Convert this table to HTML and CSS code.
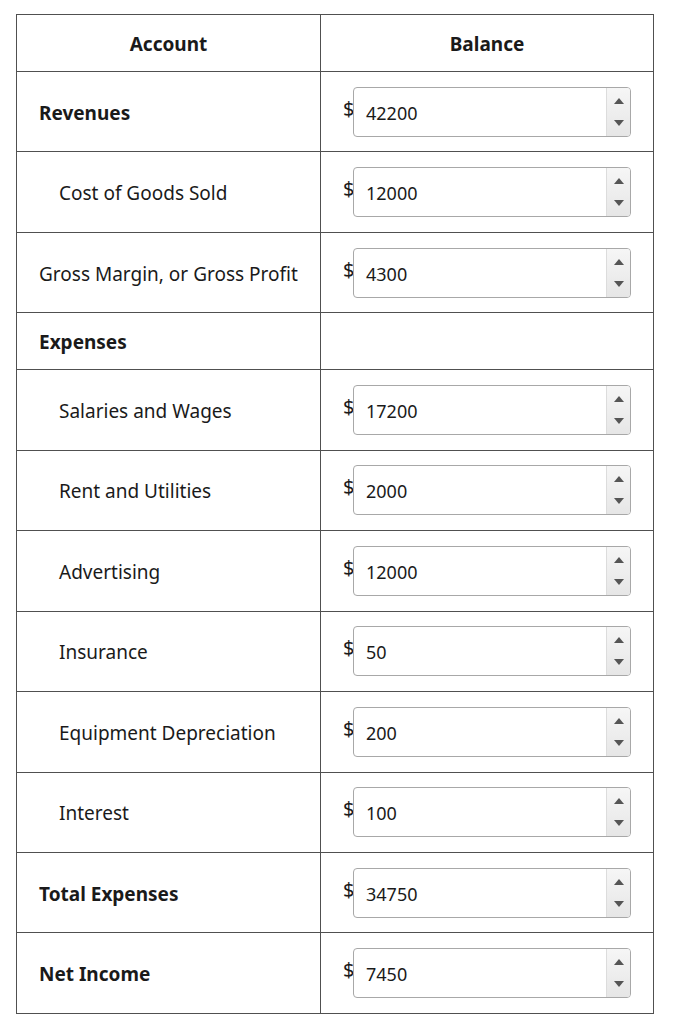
FILE: index.html
```html
<!DOCTYPE html>
<html>
<head>
<meta charset="utf-8">
<link rel="stylesheet" href="styles.css">
</head>
<body>
<table class="sheet">
  <thead>
    <tr><th class="col-account">Account</th><th class="col-balance">Balance</th></tr>
  </thead>
  <tbody>
    <tr><td class="acct bold">Revenues</td><td class="bal"><div class="money"><span class="cur">$</span><div class="spin"><span class="val">42200</span><span class="arrows"><i class="up"></i><i class="down"></i></span></div></div></td></tr>
    <tr><td class="acct indent">Cost of Goods Sold</td><td class="bal"><div class="money"><span class="cur">$</span><div class="spin"><span class="val">12000</span><span class="arrows"><i class="up"></i><i class="down"></i></span></div></div></td></tr>
    <tr><td class="acct">Gross Margin, or Gross Profit</td><td class="bal"><div class="money"><span class="cur">$</span><div class="spin"><span class="val">4300</span><span class="arrows"><i class="up"></i><i class="down"></i></span></div></div></td></tr>
    <tr class="short"><td class="acct bold">Expenses</td><td class="bal"></td></tr>
    <tr><td class="acct indent">Salaries and Wages</td><td class="bal"><div class="money"><span class="cur">$</span><div class="spin"><span class="val">17200</span><span class="arrows"><i class="up"></i><i class="down"></i></span></div></div></td></tr>
    <tr><td class="acct indent">Rent and Utilities</td><td class="bal"><div class="money"><span class="cur">$</span><div class="spin"><span class="val">2000</span><span class="arrows"><i class="up"></i><i class="down"></i></span></div></div></td></tr>
    <tr><td class="acct indent">Advertising</td><td class="bal"><div class="money"><span class="cur">$</span><div class="spin"><span class="val">12000</span><span class="arrows"><i class="up"></i><i class="down"></i></span></div></div></td></tr>
    <tr><td class="acct indent">Insurance</td><td class="bal"><div class="money"><span class="cur">$</span><div class="spin"><span class="val">50</span><span class="arrows"><i class="up"></i><i class="down"></i></span></div></div></td></tr>
    <tr><td class="acct indent">Equipment Depreciation</td><td class="bal"><div class="money"><span class="cur">$</span><div class="spin"><span class="val">200</span><span class="arrows"><i class="up"></i><i class="down"></i></span></div></div></td></tr>
    <tr><td class="acct indent">Interest</td><td class="bal"><div class="money"><span class="cur">$</span><div class="spin"><span class="val">100</span><span class="arrows"><i class="up"></i><i class="down"></i></span></div></div></td></tr>
    <tr><td class="acct bold">Total Expenses</td><td class="bal"><div class="money"><span class="cur">$</span><div class="spin"><span class="val">34750</span><span class="arrows"><i class="up"></i><i class="down"></i></span></div></div></td></tr>
    <tr><td class="acct bold">Net Income</td><td class="bal"><div class="money"><span class="cur">$</span><div class="spin"><span class="val">7450</span><span class="arrows"><i class="up"></i><i class="down"></i></span></div></div></td></tr>
  </tbody>
</table>
</body>
</html>
```

FILE: styles.css
```css
html, body {
  margin: 0;
  padding: 0;
  background: #fff;
}
body {
  padding: 14px 0 0 16px;
  font-family: "Noto Sans", "Open Sans", sans-serif;
  color: #1a1a1a;
}
.sheet {
  border-collapse: collapse;
  width: 638px;
  table-layout: fixed;
}
.sheet th, .sheet td {
  border: 1px solid #505050;
  padding: 0;
}
.col-account { width: 304px; }
.sheet th {
  height: 57px;
  font-size: 19px;
  font-weight: 700;
  text-align: center;
  padding-top: 2px;
  box-sizing: border-box;
}
.sheet tbody tr { height: 80.45px; }
.sheet tbody tr.short { height: 57px; }
.acct {
  font-size: 19px;
  padding-left: 22px !important;
  padding-top: 2px !important;
  white-space: nowrap;
}
.acct.indent { padding-left: 42px !important; }
.acct.bold { font-weight: 700; }
.bal {
  padding: 0 22px 0 22px !important;
}
.money {
  display: flex;
  align-items: center;
}
.cur {
  font-size: 20px;
  width: 9px;
  margin-right: 1px;
  margin-bottom: 6px;
  line-height: 1;
}
.spin {
  flex: 1;
  height: 48px;
  border: 1px solid #a8a8a8;
  border-radius: 4px;
  display: flex;
  align-items: center;
  overflow: hidden;
}
.val {
  flex: 1;
  font-size: 18px;
  padding-left: 12px;
  padding-top: 2px;
}
.arrows {
  width: 24px;
  height: 100%;
  border-left: 1px solid #dcdcdc;
  background: linear-gradient(#f6f6f6, #e6e6e6);
  display: flex;
  flex-direction: column;
  align-items: center;
  justify-content: space-between;
  padding: 10px 0;
  box-sizing: border-box;
}
.arrows i {
  width: 0;
  height: 0;
  border-left: 5px solid transparent;
  border-right: 5px solid transparent;
}
.arrows .up { border-bottom: 6px solid #555; }
.arrows .down { border-top: 6px solid #555; }
```
